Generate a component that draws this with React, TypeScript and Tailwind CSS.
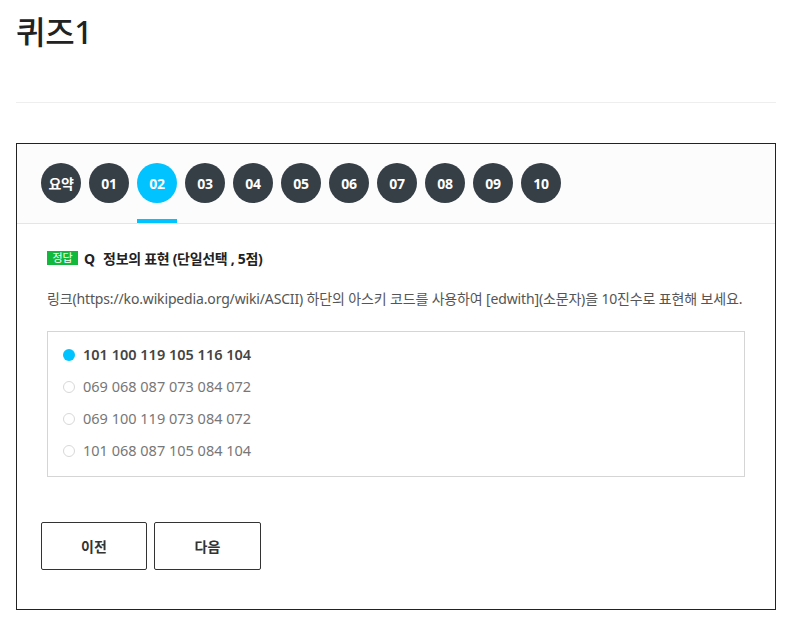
import React from "react";

const tabs = ["요약", "01", "02", "03", "04", "05", "06", "07", "08", "09", "10"];
const options = [
  "101 100 119 105 116 104",
  "069 068 087 073 084 072",
  "069 100 119 073 084 072",
  "101 068 087 105 084 104",
];

export default function App() {
  return (
    <div
      className="bg-white w-[794px] h-[627px] overflow-hidden text-[#333]"
      style={{ fontFamily: '"Noto Sans", "Noto Sans CJK KR", sans-serif' }}
    >
      <div className="ml-4 w-[760px]">
        <h1 className="pt-[8px] h-[102px] text-[32px] leading-[48px] font-medium text-[#222] tracking-[-0.3px]">
          퀴즈1
        </h1>
        <div className="h-px bg-[#eeeeee]" />
        <div className="mt-[40px] border border-[#222] h-[467px]">
          <div className="relative h-[80px] bg-[#fcfcfc] border-b border-[#e5e5e5] flex items-center gap-2 pl-6 pb-[1px]">
            {tabs.map((t, i) => (
              <div key={t} className="relative">
                <div
                  className={`w-10 h-10 rounded-full flex items-center justify-center text-white text-[14px] font-bold tracking-[-0.3px] ${
                    i === 2 ? "bg-[#00c3ff]" : "bg-[#363e46]"
                  }`}
                >
                  {t}
                </div>
                {i === 2 && (
                  <div className="absolute left-0 w-10 h-[4px] bg-[#00c3ff] top-[56px]" />
                )}
              </div>
            ))}
          </div>
          <div className="px-[30px] pt-[26px]">
            <div className="flex items-center h-[16px]">
              <span className="bg-[#12b83c] text-white text-[11px] leading-[14px] w-[31px] justify-center h-[14px] flex items-center">
                정답
              </span>
              <span className="ml-[6px] text-[14px] font-bold text-[#222]">Q</span>
              <span className="ml-[8px] text-[14px] font-bold text-[#222] tracking-[-0.3px]">
                정보의 표현 (단일선택 , 5점)
              </span>
            </div>
            <p className="mt-[24px] text-[14px] leading-[18px] text-[#555] tracking-[-0.15px] whitespace-nowrap">
              링크(https://ko.wikipedia.org/wiki/ASCII) 하단의 아스키 코드를 사용하여 [edwith](소문자)을 10진수로 표현해 보세요.
            </p>
            <div className="mt-[23px] w-[698px] h-[146px] border border-[#d5d5d5] pl-[15px] pt-[7px]">
              {options.map((o, i) => (
                <div key={o} className="h-8 flex items-center">
                  {i === 0 ? (
                    <span className="w-[12px] h-[12px] rounded-full bg-[#00c3ff]" />
                  ) : (
                    <span className="w-[12px] h-[12px] rounded-full border border-[#d8d8d8]" />
                  )}
                  <span
                    className={`ml-[8px] text-[14.5px] ${
                      i === 0 ? "font-semibold text-[#444]" : "text-[#777]"
                    }`}
                  >
                    {o}
                  </span>
                </div>
              ))}
            </div>
          </div>
          <div className="flex gap-[7px] pl-6 mt-[45px]">
            <button className="w-[106px] h-[48px] border border-[#333] rounded-[2px] text-[14px] font-semibold text-[#333] bg-white">
              이전
            </button>
            <button className="w-[107px] h-[48px] border border-[#333] rounded-[2px] text-[14px] font-semibold text-[#333] bg-white">
              다음
            </button>
          </div>
        </div>
      </div>
    </div>
  );
}
